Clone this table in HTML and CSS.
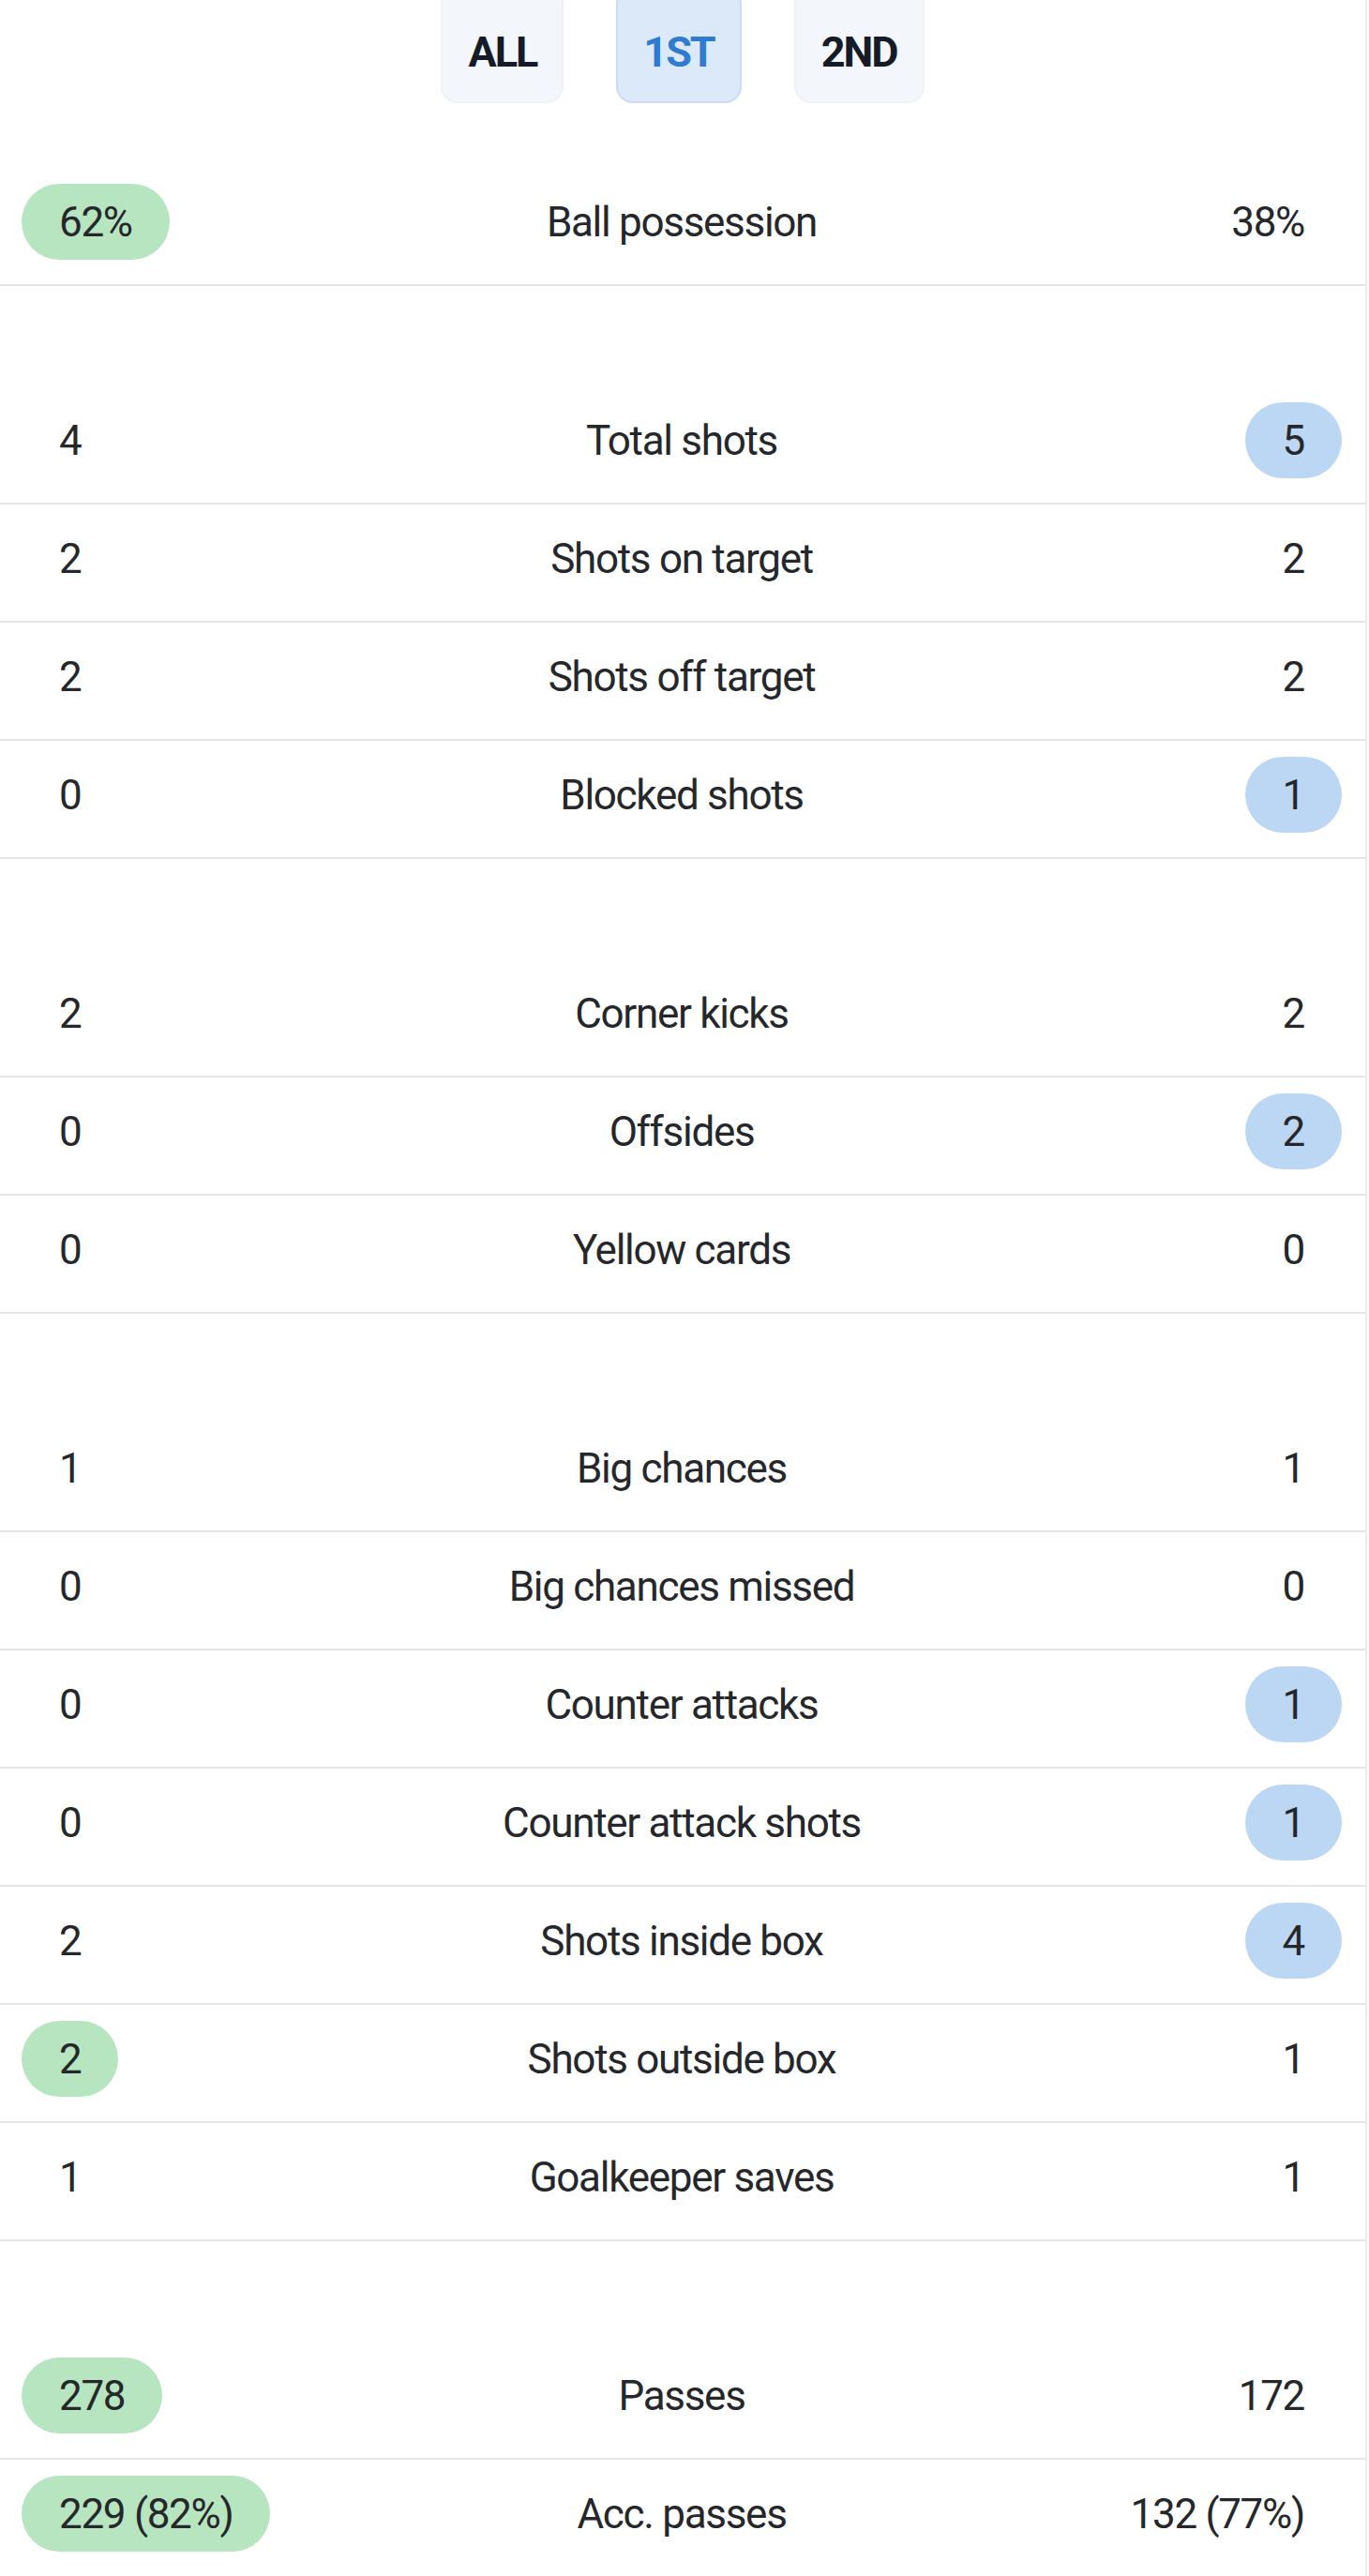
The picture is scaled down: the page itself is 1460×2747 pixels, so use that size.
FILE: index.html
```html
<!DOCTYPE html>
<html lang="en">
<head>
<meta charset="utf-8">
<title>Match statistics</title>
<link rel="stylesheet" href="styles.css">
</head>
<body>
<div class="stats">
  <nav class="tabs">
    <button class="tab">ALL</button>
    <button class="tab tab-active">1ST</button>
    <button class="tab">2ND</button>
  </nav>

  <section class="group group-first">
    <div class="row"><span class="val home win-home">62%</span><span class="label">Ball possession</span><span class="val away">38%</span></div>
  </section>

  <section class="group">
    <div class="row"><span class="val home">4</span><span class="label">Total shots</span><span class="val away win-away">5</span></div>
    <div class="row"><span class="val home">2</span><span class="label">Shots on target</span><span class="val away">2</span></div>
    <div class="row"><span class="val home">2</span><span class="label">Shots off target</span><span class="val away">2</span></div>
    <div class="row"><span class="val home">0</span><span class="label">Blocked shots</span><span class="val away win-away">1</span></div>
  </section>

  <section class="group">
    <div class="row"><span class="val home">2</span><span class="label">Corner kicks</span><span class="val away">2</span></div>
    <div class="row"><span class="val home">0</span><span class="label">Offsides</span><span class="val away win-away">2</span></div>
    <div class="row"><span class="val home">0</span><span class="label">Yellow cards</span><span class="val away">0</span></div>
  </section>

  <section class="group">
    <div class="row"><span class="val home">1</span><span class="label">Big chances</span><span class="val away">1</span></div>
    <div class="row"><span class="val home">0</span><span class="label">Big chances missed</span><span class="val away">0</span></div>
    <div class="row"><span class="val home">0</span><span class="label">Counter attacks</span><span class="val away win-away">1</span></div>
    <div class="row"><span class="val home">0</span><span class="label">Counter attack shots</span><span class="val away win-away">1</span></div>
    <div class="row"><span class="val home">2</span><span class="label">Shots inside box</span><span class="val away win-away">4</span></div>
    <div class="row"><span class="val home win-home">2</span><span class="label">Shots outside box</span><span class="val away">1</span></div>
    <div class="row"><span class="val home">1</span><span class="label">Goalkeeper saves</span><span class="val away">1</span></div>
  </section>

  <section class="group">
    <div class="row"><span class="val home win-home">278</span><span class="label">Passes</span><span class="val away">172</span></div>
    <div class="row"><span class="val home win-home">229 (82%)</span><span class="label">Acc. passes</span><span class="val away">132 (77%)</span></div>
  </section>
</div>
</body>
</html>
```

FILE: styles.css
```css
html, body {
  margin: 0;
  padding: 0;
  background: #ffffff;
}

body {
  font-family: Roboto, "Liberation Sans", Arial, sans-serif;
  color: #25272b;
  overflow: hidden;
}

.stats {
  width: 1456px;
  border-right: 2px solid #ececec;
  min-height: 2760px;
}

.tabs {
  display: flex;
  justify-content: center;
  gap: 56px;
  margin-top: -14px;
  margin-bottom: 69px;
}

.tab {
  height: 124px;
  padding: 14px 27px 0;
  border: 2px solid #eef2f7;
  border-radius: 18px;
  background: #f3f6fa;
  font-family: Roboto, "Liberation Sans", Arial, sans-serif;
  font-weight: 700;
  font-size: 45px;
  letter-spacing: -2px;
  color: #161c27;
  cursor: pointer;
}

.tab-active {
  background: #dce9f8;
  border-color: #c9dcf2;
  color: #2f7bd0;
}

.group {
  margin-top: 107px;
}

.group-first {
  margin-top: 0;
}

.row {
  display: grid;
  grid-template-columns: 1fr auto 1fr;
  align-items: center;
  box-sizing: border-box;
  height: 126px;
  padding: 17px 25px 26px 23px;
  border-bottom: 2px solid #e5e5e5;
}

.label {
  font-size: 44px;
  letter-spacing: -1.3px;
  text-align: center;
  white-space: nowrap;
}

.val {
  display: inline-flex;
  align-items: center;
  height: 81px;
  padding: 0 40px;
  border-radius: 41px;
  font-size: 44px;
  letter-spacing: -1.3px;
  white-space: nowrap;
}

.home {
  justify-self: start;
}

.away {
  justify-self: end;
}

.win-home {
  background: #b6e5bf;
}

.win-away {
  background: #bcd7f3;
}
```
